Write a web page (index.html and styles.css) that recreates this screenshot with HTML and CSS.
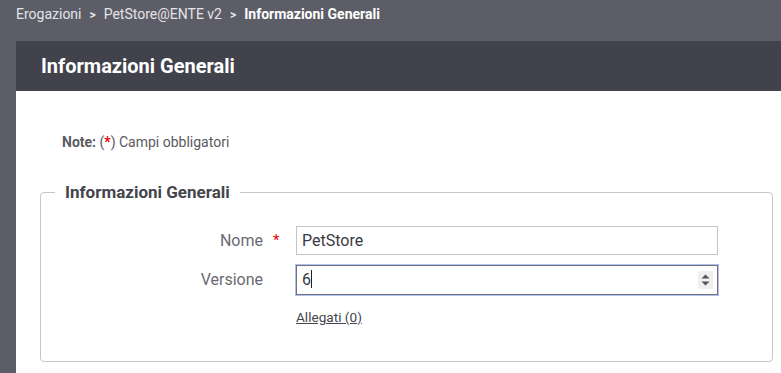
FILE: index.html
```html
<!DOCTYPE html>
<html lang="it">
<head>
    <meta charset="UTF-8">
    <title>Informazioni Generali</title>
    <link rel="stylesheet" href="styles.css">
</head>
<body>
    <div class="breadcrumb">
        <span>Erogazioni</span>
        <span class="sep">&gt;</span>
        <span>PetStore@ENTE v2</span>
        <span class="sep">&gt;</span>
        <span class="current">Informazioni Generali</span>
    </div>

    <div class="panel">
        <div class="panel-header">Informazioni Generali</div>
        <div class="panel-body">
            <p class="note"><b>Note:</b> (<span class="req">*</span>) Campi obbligatori</p>

            <fieldset class="group">
                <legend>Informazioni Generali</legend>
                <div class="row">
                    <label class="label">Nome<span class="star">*</span></label>
                    <div class="field">PetStore</div>
                </div>
                <div class="row">
                    <label class="label">Versione</label>
                    <div class="field focus">6<span class="caret"></span>
                        <span class="spin">
                            <svg width="9" height="12" viewBox="0 0 9 12"><path d="M4.5 0.5 L8.5 4.5 H0.5 Z M0.5 7.5 H8.5 L4.5 11.5 Z" fill="#555"/></svg>
                        </span>
                    </div>
                </div>
                <div class="row">
                    <span></span>
                    <a class="link" href="#">Allegati (0)</a>
                </div>
            </fieldset>
        </div>
    </div>
</body>
</html>
```

FILE: styles.css
```css
body {
    margin: 0;
    background: #5d5d67;
    font-family: Roboto, 'Liberation Sans', sans-serif;
    overflow: hidden;
}
.breadcrumb {
    height: 41px;
    box-sizing: border-box;
    padding: 6px 16px 0;
    font-size: 14px;
    color: #e4e4e8;
    display: flex;
    gap: 8px;
}
.breadcrumb .sep {
    font-weight: bold;
    font-size: 12px;
    line-height: 19px;
}
.breadcrumb .current {
    color: #fff;
    font-weight: bold;
}
.panel {
    margin-left: 16px;
    background: #fff;
    height: 340px;
}
.panel-header {
    background: #42424c;
    color: #fff;
    height: 50px;
    line-height: 50px;
    padding-left: 25px;
    font-size: 20px;
    font-weight: bold;
}
.panel-body {
    padding: 40px 8px 0 24px;
}
.note {
    margin: 0 0 29px 22px;
    font-size: 14px;
    color: #5a5a62;
    line-height: 22px;
}
.req {
    color: #e00;
    font-weight: bold;
}
.group {
    margin: 0;
    border: 1px solid #c6c6c6;
    border-radius: 4px;
    padding: 24px 0 27px;
}
.group legend {
    margin-left: 14px;
    padding: 0 10px;
    font-size: 17px;
    line-height: 20px;
    font-weight: bold;
    color: #45454d;
}
.row {
    display: grid;
    grid-template-columns: 222px 422px;
    column-gap: 33px;
    align-items: center;
    margin-bottom: 9px;
}
.label {
    text-align: right;
    font-size: 16px;
    color: #6a6a72;
    position: relative;
}
.star {
    position: absolute;
    left: 232px;
    top: 0;
    color: #e00;
    font-size: 15px;
}
.field {
    height: 29px;
    box-sizing: border-box;
    border: 1px solid #c4c4c4;
    padding: 0 5px;
    font-size: 16px;
    line-height: 27px;
    color: #3a3a42;
    position: relative;
}
.field.focus {
    height: 30px;
    margin-top: 1px;
    border-color: #7e6d72;
    box-shadow: 0 0 0 1px #a9c2ee;
}
.caret {
    display: inline-block;
    width: 1px;
    height: 18px;
    background: #222;
    vertical-align: -3px;
}
.spin {
    position: absolute;
    right: 4px;
    top: 5px;
    width: 15px;
    height: 18px;
    background: #efefef;
    display: flex;
    align-items: center;
    justify-content: center;
}
.link {
    font-size: 13.6px;
    color: #45454d;
    margin-top: 5px;
}
```
